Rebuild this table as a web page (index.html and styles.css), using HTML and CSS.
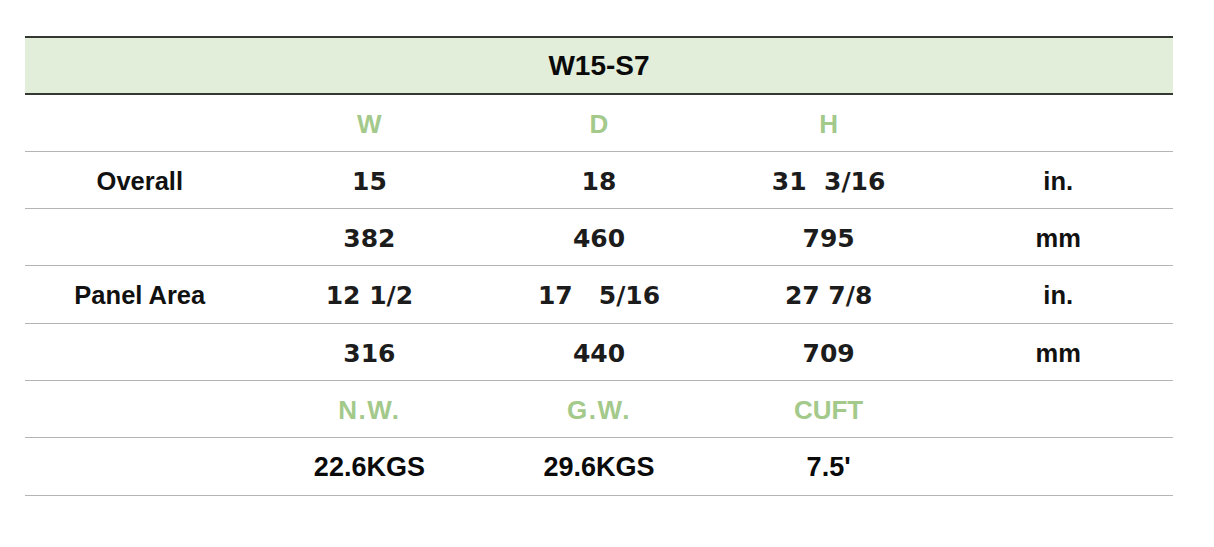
FILE: index.html
```html
<!DOCTYPE html>
<html>
<head>
<meta charset="utf-8">
<link rel="stylesheet" href="styles.css">
</head>
<body>
<div class="spec">
  <div class="title">W15-S7</div>
  <div class="row">
    <div class="cell"></div>
    <div class="cell head">W</div>
    <div class="cell head">D</div>
    <div class="cell head">H</div>
    <div class="cell"></div>
  </div>
  <div class="row">
    <div class="cell label">Overall</div>
    <div class="cell num">15</div>
    <div class="cell num">18</div>
    <div class="cell num">31  3/16</div>
    <div class="cell unit">in.</div>
  </div>
  <div class="row">
    <div class="cell"></div>
    <div class="cell num">382</div>
    <div class="cell num">460</div>
    <div class="cell num">795</div>
    <div class="cell unit">mm</div>
  </div>
  <div class="row tall">
    <div class="cell label">Panel Area</div>
    <div class="cell num">12 1/2</div>
    <div class="cell num">17   5/16</div>
    <div class="cell num">27 7/8</div>
    <div class="cell unit">in.</div>
  </div>
  <div class="row">
    <div class="cell"></div>
    <div class="cell num">316</div>
    <div class="cell num">440</div>
    <div class="cell num">709</div>
    <div class="cell unit">mm</div>
  </div>
  <div class="row">
    <div class="cell"></div>
    <div class="cell head wide">N.W.</div>
    <div class="cell head wide">G.W.</div>
    <div class="cell head">CUFT</div>
    <div class="cell"></div>
  </div>
  <div class="row tall">
    <div class="cell"></div>
    <div class="cell weight">22.6KGS</div>
    <div class="cell weight">29.6KGS</div>
    <div class="cell weight">7.5'</div>
    <div class="cell"></div>
  </div>
</div>
</body>
</html>
```

FILE: styles.css
```css
html, body {
  margin: 0;
  padding: 0;
  background: #ffffff;
}

body {
  font-family: "Liberation Sans", Arial, sans-serif;
  color: #111111;
}

.spec {
  width: 1148px;
  margin: 36px 0 0 25px;
}

.title {
  box-sizing: border-box;
  height: 59px;
  border-top: 2px solid #333833;
  border-bottom: 2px solid #333833;
  background: #e2eed9;
  display: flex;
  align-items: center;
  justify-content: center;
  font-size: 28px;
  font-weight: 700;
  color: #0a0a0a;
}

.row {
  box-sizing: border-box;
  height: 57px;
  border-bottom: 1px solid #b4b4b4;
  display: grid;
  grid-template-columns: repeat(5, 1fr);
}

.row.tall {
  height: 58px;
}

.cell {
  display: flex;
  align-items: center;
  justify-content: center;
  white-space: pre;
  padding-top: 2px;
}

.head {
  font-size: 26px;
  font-weight: 700;
  color: #a3c98b;
}

.head.wide {
  letter-spacing: 1.5px;
}

.label,
.unit {
  font-size: 25.5px;
  font-weight: 700;
  color: #111111;
}

.num {
  font-family: "DejaVu Sans", sans-serif;
  font-size: 25px;
  font-weight: 700;
  color: #1c1c1c;
}

.weight {
  font-size: 27px;
  font-weight: 700;
  color: #0a0a0a;
}
```
